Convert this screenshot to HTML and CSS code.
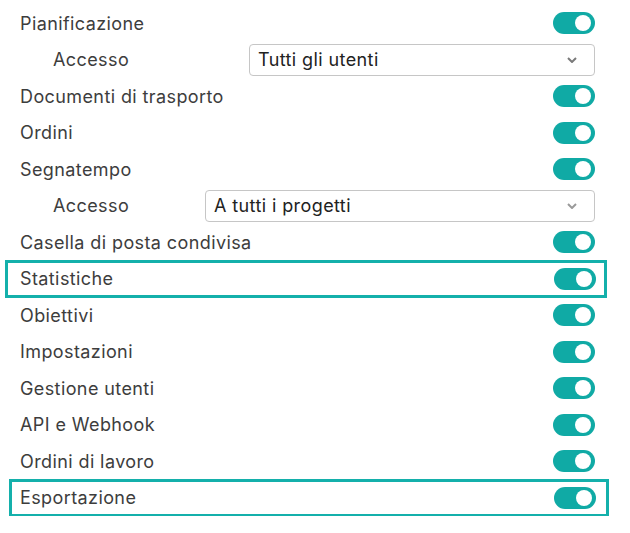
FILE: index.html
```html
<!DOCTYPE html>
<html lang="it">
<head>
<meta charset="utf-8">
<link rel="stylesheet" href="styles.css">
</head>
<body>
<div class="list">
  <div class="row"><span class="label">Pianificazione</span><span class="toggle"></span></div>
  <div class="row sub"><span class="label">Accesso</span><div class="select sel1"><span>Tutti gli utenti</span><svg class="chev" viewBox="0 0 10 6" width="10" height="6"><path d="M1 1l4 4 4-4" fill="none" stroke="#7a7a7a" stroke-width="2"/></svg></div></div>
  <div class="row"><span class="label">Documenti di trasporto</span><span class="toggle"></span></div>
  <div class="row"><span class="label">Ordini</span><span class="toggle"></span></div>
  <div class="row"><span class="label">Segnatempo</span><span class="toggle"></span></div>
  <div class="row sub"><span class="label">Accesso</span><div class="select sel2"><span>A tutti i progetti</span><svg class="chev" viewBox="0 0 10 6" width="10" height="6"><path d="M1 1l4 4 4-4" fill="none" stroke="#9a9a9a" stroke-width="2"/></svg></div></div>
  <div class="row"><span class="label">Casella di posta condivisa</span><span class="toggle"></span></div>
  <div class="row hl hl1"><span class="label">Statistiche</span><span class="toggle"></span></div>
  <div class="row"><span class="label">Obiettivi</span><span class="toggle"></span></div>
  <div class="row"><span class="label">Impostazioni</span><span class="toggle"></span></div>
  <div class="row"><span class="label">Gestione utenti</span><span class="toggle"></span></div>
  <div class="row"><span class="label">API e Webhook</span><span class="toggle"></span></div>
  <div class="row"><span class="label">Ordini di lavoro</span><span class="toggle"></span></div>
  <div class="row hl hl2"><span class="label">Esportazione</span><span class="toggle"></span></div>
</div>
</body>
</html>
```
FILE: styles.css
```css
html, body {
  margin: 0;
  padding: 0;
  background: #ffffff;
}
body {
  font-family: Inter, "Noto Sans", sans-serif;
  font-size: 18px;
  letter-spacing: 0.4px;
  color: #3d3d3d;
}
.list {
  display: flex;
  flex-direction: column;
  padding-top: 5px;
}
.row {
  height: 36.5px;
  box-sizing: border-box;
  display: flex;
  align-items: center;
  justify-content: space-between;
  padding: 0 35px 0 20px;
}
.row.sub {
  padding-left: 53px;
}
.toggle {
  width: 42px;
  height: 22px;
  border-radius: 11px;
  background: #10aaa5;
  display: flex;
  align-items: center;
  justify-content: flex-end;
  padding-right: 4px;
  box-sizing: border-box;
}
.toggle::after {
  content: "";
  width: 16px;
  height: 16px;
  border-radius: 50%;
  background: #ffffff;
}
.select {
  height: 32px;
  box-sizing: border-box;
  border: 1px solid #c6c6c6;
  border-radius: 4px;
  display: flex;
  align-items: center;
  justify-content: space-between;
  padding: 0 17px 0 8px;
  color: #222;
}
.sel1 { width: 346px; }
.sel2 { width: 390px; }
.hl {
  border: 3px solid #14b0ab;
  height: 38px;
  margin-top: -0.75px;
  margin-bottom: -0.75px;
}
.hl1 {
  margin-left: 5px;
  margin-right: 23px;
  padding-left: 12px;
  padding-right: 8px;
}
.hl2 {
  margin-left: 9px;
  margin-right: 21px;
  padding-left: 8px;
  padding-right: 10px;
}
```
